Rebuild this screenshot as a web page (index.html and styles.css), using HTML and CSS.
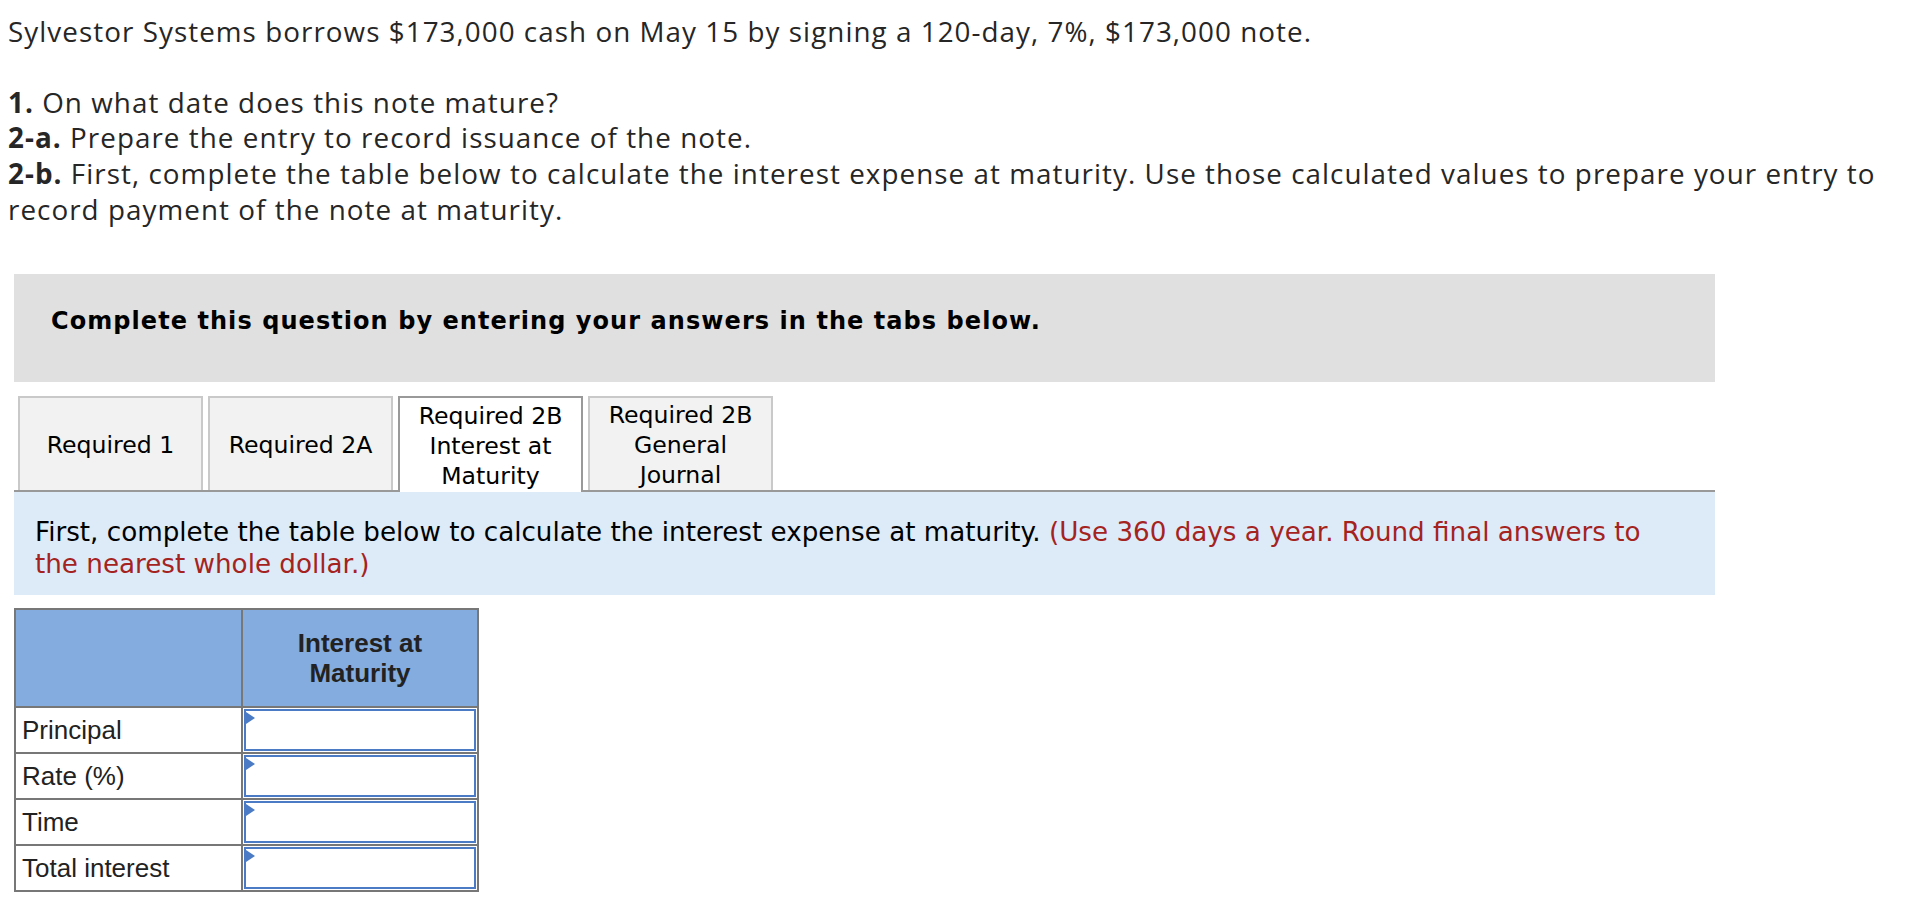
FILE: index.html
```html
<!DOCTYPE html>
<html lang="en">
<head>
<meta charset="utf-8">
<title>Notes payable</title>
<link rel="stylesheet" href="styles.css">
</head>
<body>
<div class="question">
  <p class="intro">Sylvestor Systems borrows $173,000 cash on May 15 by signing a 120-day, 7%, $173,000 note.</p>
  <p class="reqs"><b>1.</b> On what date does this note mature?<br><b>2-a.</b> Prepare the entry to record issuance of the note.<br><b>2-b.</b> First, complete the table below to calculate the interest expense at maturity. Use those calculated values to prepare your entry to record payment of the note at maturity.</p>
</div>
<div class="work">
  <div class="banner">Complete this question by entering your answers in the tabs below.</div>
  <div class="tabs">
    <div class="tab">Required 1</div>
    <div class="tab">Required 2A</div>
    <div class="tab active">Required 2B Interest at Maturity</div>
    <div class="tab">Required 2B General Journal</div>
  </div>
  <div class="panel">First, complete the table below to calculate the interest expense at maturity. <span class="red">(Use 360 days a year. Round final answers to the nearest whole dollar.)</span></div>
  <table class="grid">
    <colgroup><col class="c1"><col class="c2"></colgroup>
    <thead>
      <tr><th></th><th>Interest at<br>Maturity</th></tr>
    </thead>
    <tbody>
      <tr><td class="label">Principal</td><td class="entry"><span class="field"></span></td></tr>
      <tr><td class="label">Rate (%)</td><td class="entry"><span class="field"></span></td></tr>
      <tr><td class="label">Time</td><td class="entry"><span class="field"></span></td></tr>
      <tr><td class="label">Total interest</td><td class="entry"><span class="field"></span></td></tr>
    </tbody>
  </table>
</div>
</body>
</html>
```
FILE: styles.css
```css
body {
  margin: 0;
  background: #fff;
  color: #262626;
  font-family: "Open Sans", "Liberation Sans", sans-serif;
}

.question {
  padding: 14px 8px 0;
  font-size: 27.8px;
  line-height: 35.7px;
  letter-spacing: 1.05px;
}

.intro {
  margin: 0 0 35px;
}

.reqs {
  margin: 0;
}

.reqs b {
  font-weight: 700;
}

.work {
  margin: 46px 0 0 14px;
  width: 1701px;
}

.banner {
  box-sizing: border-box;
  height: 108px;
  padding: 32px 31px 0 37px;
  background: #e0e0e0;
  color: #000;
  font-family: "DejaVu Sans", sans-serif;
  font-weight: bold;
  font-size: 24px;
  line-height: 30px;
  letter-spacing: 1.06px;
}

.tabs {
  display: flex;
  gap: 5px;
  margin: 14px 0 0 4px;
  height: 94px;
}

.tab {
  box-sizing: border-box;
  width: 185px;
  height: 94px;
  padding: 2px 6px 0;
  display: flex;
  align-items: center;
  justify-content: center;
  text-align: center;
  background: #f2f2f2;
  border: 2px solid #c9c9c9;
  border-bottom: none;
  color: #000;
  font-family: "DejaVu Sans", sans-serif;
  font-size: 23.6px;
  line-height: 30px;
}

.tab.active {
  position: relative;
  z-index: 1;
  height: 96px;
  background: #fff;
  border-color: #999;
}

.panel {
  border-top: 2px solid #999;
  background: #ddebf8;
  padding: 24px 50px 15px 21px;
  color: #000;
  font-family: "DejaVu Sans", sans-serif;
  font-size: 26.2px;
  line-height: 32px;
}

.red {
  color: #a5231f;
}

.grid {
  margin-top: 13px;
  width: 463px;
  table-layout: fixed;
  border-collapse: collapse;
  border: 2px solid #777;
  font-family: "Liberation Sans", Arial, sans-serif;
  color: #222;
}

.c1 {
  width: 227px;
}

.c2 {
  width: 236px;
}

.grid th {
  height: 96px;
  padding: 0;
  border: 2px solid #777;
  background: #84acdf;
  font-size: 26px;
  line-height: 30px;
  font-weight: bold;
  text-align: center;
  vertical-align: middle;
}

.grid td {
  border: 2px solid #777;
  padding: 0;
}

.grid td.label {
  padding: 0 6px;
  font-size: 26px;
  line-height: 30px;
  vertical-align: middle;
}

.grid td.entry {
  position: relative;
  padding: 1px;
}

.field {
  display: block;
  box-sizing: border-box;
  height: 42px;
  border: 2px solid #4a7bc4;
  background: #fff;
}

.entry::before {
  content: "";
  position: absolute;
  left: 3px;
  top: 4px;
  border-left: 9px solid #4a7bc4;
  border-top: 6px solid transparent;
  border-bottom: 6px solid transparent;
}
```
